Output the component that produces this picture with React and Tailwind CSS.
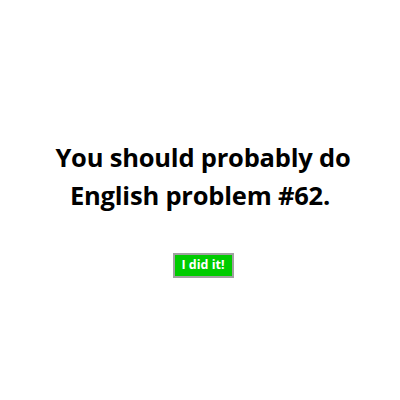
export default function App() {
  return (
    <div className="w-[400px] h-[400px] bg-white flex flex-col items-center pt-[138px] font-['Open_Sans',sans-serif]">
      <h1 className="text-[25.5px] leading-[38px] font-bold text-black text-center tracking-[-0.2px]">
        <span className="pl-[6px]">You should probably do</span>
        <br />
        English problem #62.
      </h1>
      <button className="mt-[39px] ml-[6px] bg-[#00cc00] border-2 border-[#a0a0a0] text-white text-[12.5px] font-bold w-[61px] h-[25px] leading-none">
        I did it!
      </button>
    </div>
  );
}
